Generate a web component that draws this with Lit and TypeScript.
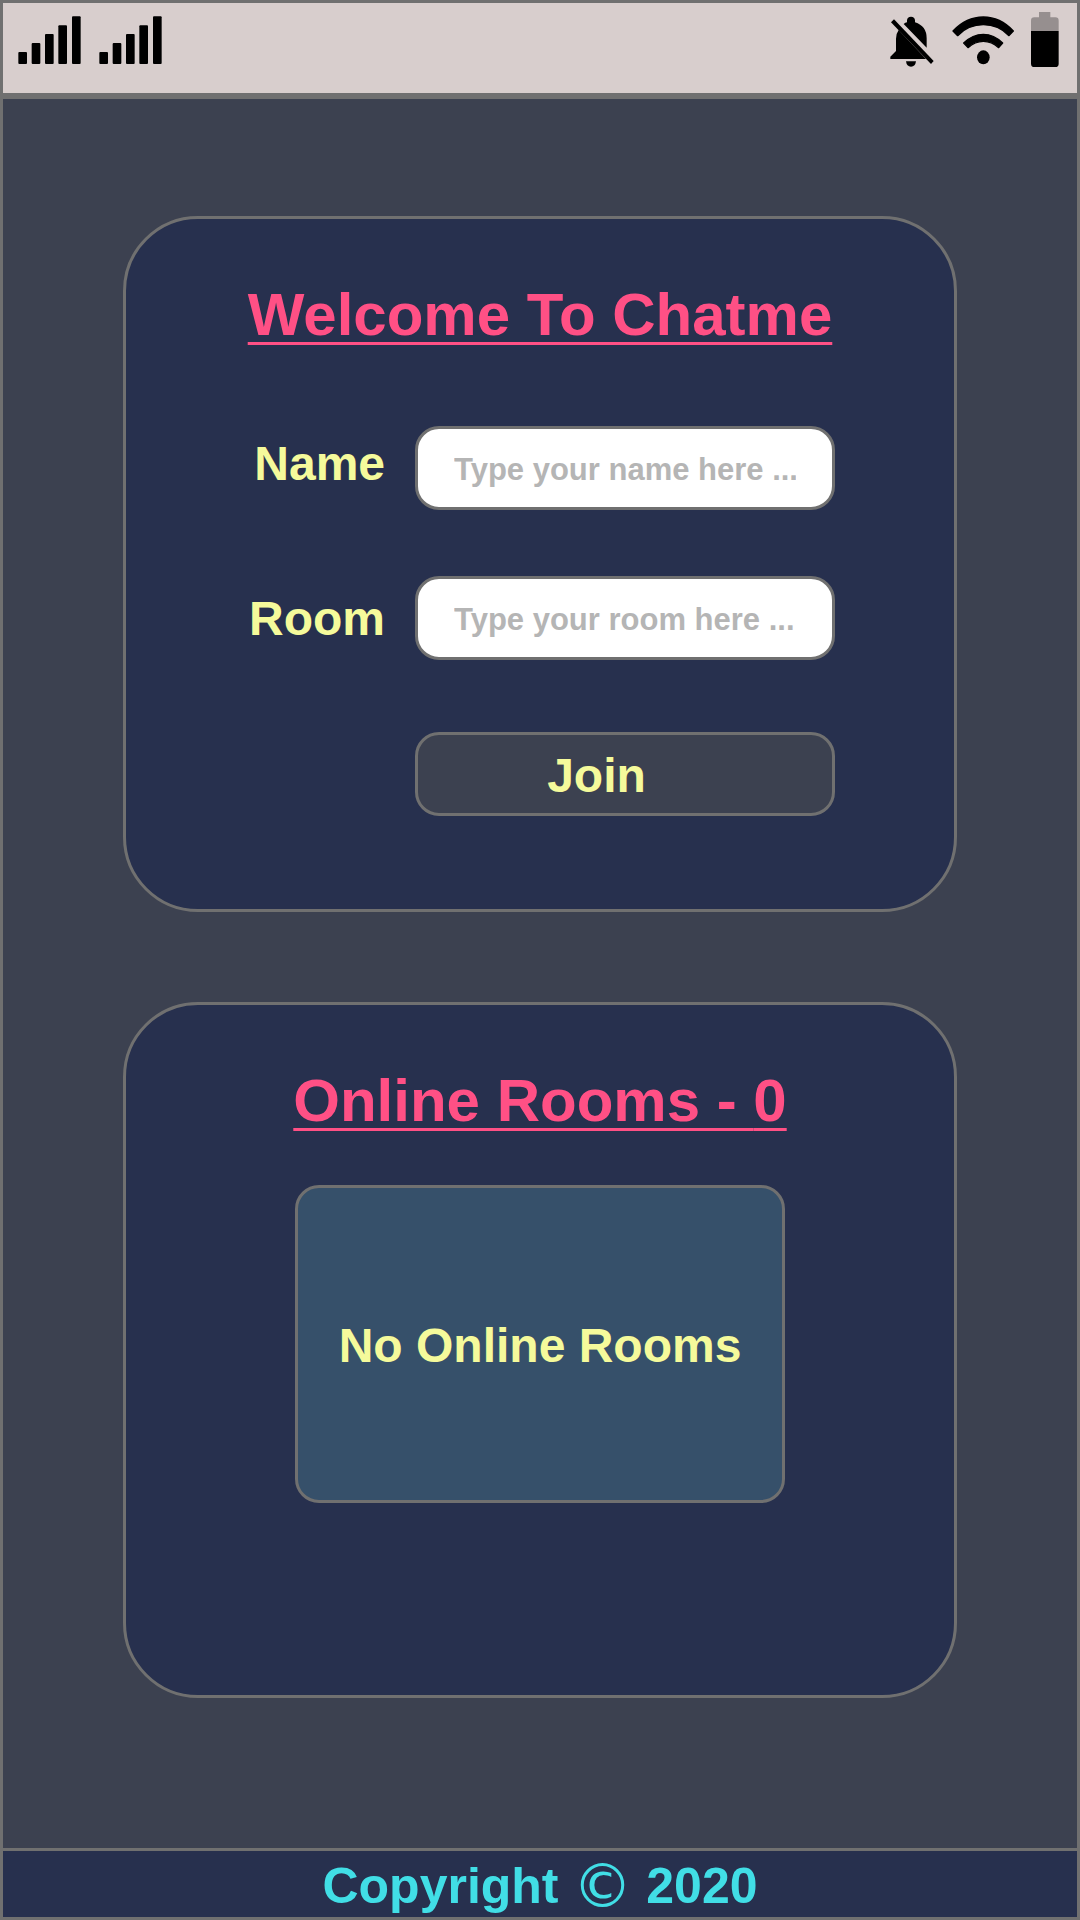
import { LitElement, html, css, svg } from "lit";
import { customElement, state } from "lit/decorators.js";

const SIGNAL_BARS = [
  { x: 55, top: 156 },
  { x: 95, top: 129 },
  { x: 135, top: 102 },
  { x: 175, top: 76 },
  { x: 216, top: 49 },
];

@customElement("status-bar")
export class StatusBar extends LitElement {
  static styles = css`
    :host {
      display: flex;
      justify-content: space-between;
      box-sizing: border-box;
      height: 96px;
      padding: 9px 18px 0 15px;
      background: #d8cecd;
      border-bottom: 6px solid #707070;
    }
    .group {
      display: flex;
      gap: 17px;
    }
    .icon {
      display: block;
      height: 56px;
    }
    .signal {
      width: 64px;
    }
    .bell {
      width: 44px;
    }
    .wifi {
      width: 63px;
    }
    .battery {
      width: 28px;
    }
  `;

  private signal() {
    return html`<svg class="icon signal" viewBox="54 36 192 168" role="img" aria-label="Signal">
      ${SIGNAL_BARS.map(
        (bar) => svg`<rect x=${bar.x} y=${bar.top} width="26" height=${192 - bar.top} rx="3" />`
      )}
    </svg>`;
  }

  render() {
    return html`
      <div class="group">${this.signal()}${this.signal()}</div>
      <div class="group">
        <svg class="icon bell" viewBox="60 36 132 168" role="img" aria-label="Notifications off">
          <path d="M63 67 L72 58 L191 183 L183 192 Z" />
          <path d="M101 72 Q106 68 111 67 V61 Q112 50 123 50 Q134 50 135 61 V67 Q170 78 170 115 V143 Z" />
          <path d="M86 90 Q78 101 78 116 V153 L61 170 V177 H168 Z" />
          <path d="M108 184 H138 Q136 200 123 200 Q110 200 108 184 Z" />
        </svg>
        <svg class="icon wifi" viewBox="243 36 189 168" role="img" aria-label="Wi-Fi">
          <g stroke="#000" stroke-width="4" stroke-linejoin="round">
            <path d="M249 93 Q289 51 340 51 Q391 51 430 93 L417 107 Q385 74 340 74 Q295 74 263 107 Z" />
            <path d="M281 129 Q308 103 340 103 Q372 103 398 129 L386 143 Q365 124 340 124 Q315 124 294 143 Z" />
          </g>
          <ellipse cx="340" cy="172" rx="19" ry="21" />
        </svg>
        <svg class="icon battery" viewBox="483 36 84 168" role="img" aria-label="Battery">
          <path fill="#968f8f" d="M483 93 V62 Q483 52 493 52 H507 V36 H541 V52 H556 Q566 52 566 62 V93 Z" />
          <path d="M483 93 H566 V191 Q566 201 556 201 H493 Q483 201 483 191 Z" />
        </svg>
      </div>
    `;
  }
}

@customElement("app-root")
export class AppRoot extends LitElement {
  static styles = css`
    :host {
      display: flex;
      flex-direction: column;
      box-sizing: border-box;
      min-height: 100vh;
      border: 3px solid #707070;
      background: #3c4150;
      color: #f5fa9b;
      font-family: "Arial Rounded MT Bold", "Liberation Sans", Arial, sans-serif;
      font-size: 48px;
      font-weight: 700;
      line-height: 60px;
    }
    .content {
      flex: 1;
      display: flex;
      flex-direction: column;
      gap: 90px;
      padding: 117px 120px 150px;
    }
    .card {
      display: flex;
      flex-direction: column;
      align-items: center;
      box-sizing: border-box;
      padding: 61px 24px;
      border: 3px solid #707070;
      border-radius: 75px;
      background: #27304e;
    }
    .join-card {
      gap: 76px;
      padding-bottom: 93px;
    }
    .rooms-card {
      gap: 49px;
      padding-bottom: 192px;
    }
    .title {
      margin: 0;
      color: #ff5085;
      font-size: 60px;
      line-height: 70px;
      text-decoration: underline;
      text-decoration-thickness: 3px;
      text-underline-offset: 7px;
    }
    .form {
      display: grid;
      grid-template-columns: 140px minmax(0, 420px);
      column-gap: 30px;
    }
    .label {
      text-align: right;
    }
    .field,
    .join {
      box-sizing: border-box;
      width: 100%;
      height: 84px;
      border: 3px solid #707070;
      border-radius: 24px;
      font: inherit;
    }
    .field {
      margin-bottom: 66px;
      padding: 3px 36px 0;
      background: #fff;
      color: #27304e;
      font-size: 31px;
    }
    .field::placeholder {
      color: #b5b5b5;
      opacity: 1;
    }
    .name-label,
    .name-field {
      align-self: baseline;
    }
    .room-label {
      line-height: 86px;
    }
    .room-field {
      margin-bottom: 72px;
    }
    .join {
      grid-column: 2;
      padding: 3px 57px 0 0;
      background: #3c4150;
      color: inherit;
      cursor: pointer;
    }
    .rooms {
      display: flex;
      align-items: center;
      justify-content: center;
      box-sizing: border-box;
      width: 100%;
      max-width: 490px;
      min-height: 318px;
      padding-top: 3px;
      border: 3px solid #707070;
      border-radius: 24px;
      background: #36506a;
    }
    .message {
      margin: 0;
    }
    .footer {
      padding: 5px 0 1px;
      border-top: 3px solid #707070;
      background: #27304e;
      color: #41dee6;
      font-size: 50px;
      text-align: center;
    }
    .copy {
      font-family: "DejaVu Sans", sans-serif;
      font-size: 60px;
      font-weight: 400;
      line-height: 1;
      vertical-align: top;
    }
  `;

  @state() private rooms: string[] = [];

  private onSubmit(event: Event) {
    event.preventDefault();
  }

  render() {
    return html`
      <status-bar></status-bar>
      <main class="content">
        <section class="card join-card">
          <h1 class="title">Welcome To Chatme</h1>
          <form class="form" @submit=${this.onSubmit}>
            <label class="label name-label" for="name">Name</label>
            <input class="field name-field" id="name" type="text" placeholder="Type your name here ..." />
            <label class="label room-label" for="room">Room</label>
            <input class="field room-field" id="room" type="text" placeholder="Type your room here ..." />
            <button class="join" type="submit">Join</button>
          </form>
        </section>
        <section class="card rooms-card">
          <h2 class="title">Online Rooms - ${this.rooms.length}</h2>
          <div class="rooms">
            ${this.rooms.length
              ? this.rooms.map((room) => html`<p class="message">${room}</p>`)
              : html`<p class="message">No Online Rooms</p>`}
          </div>
        </section>
      </main>
      <footer class="footer">Copyright <span class="copy">©</span> 2020</footer>
    `;
  }
}
